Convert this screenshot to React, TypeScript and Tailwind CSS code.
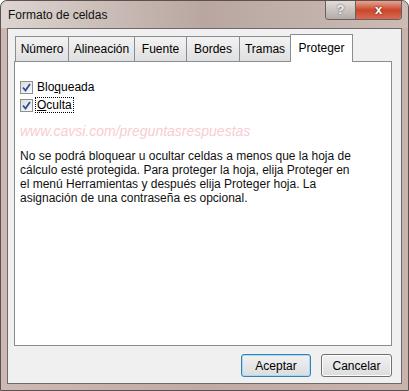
import React from "react";

const tabs = ["Número", "Alineación", "Fuente", "Bordes", "Tramas"];
const tabWidths = ["w-[54px]", "w-[67px]", "w-[53px]", "w-[54px]", "w-[52px]"];

function CheckBox({ label, focused }: { label: string; focused?: boolean }) {
  return (
    <label className="flex items-center h-[18px]">
      <span className="w-[13px] h-[13px] border border-[#8e8f8f] bg-gradient-to-br from-[#dcdcdc] to-[#fbfbfb] flex items-center justify-center">
        <svg width="9" height="9" viewBox="0 0 9 9">
          <path d="M1 4.5 L3.5 7.5 L8 1" fill="none" stroke="#2a4fa0" strokeWidth="1.8" />
        </svg>
      </span>
      <span
        className={
          "ml-[3px] px-[1px] leading-[14px] " +
          (focused ? "outline outline-1 outline-dotted outline-black" : "")
        }
      >
        {label === "Oculta" ? (
          <>
            <span className="underline">O</span>culta
          </>
        ) : (
          <>
            Blo<span className="underline">q</span>ueada
          </>
        )}
      </span>
    </label>
  );
}

export default function App() {
  return (
    <div
      className="w-[409px] h-[391px] flex flex-col rounded-t-[7px] border border-[#5c5050] bg-gradient-to-r from-[#cdb9b3] via-[#c2aaa4] to-[#c9b3ad] text-[12px] text-black"
      style={{ fontFamily: '"Liberation Sans", Arial, sans-serif' }}
    >
      {/* barra de título */}
      <div className="h-[27px] flex justify-between rounded-t-[7px] bg-gradient-to-r from-[#ddd5d1] via-[#b9a6a0] to-[#cbbcb6]">
        <span className="pl-[7px] pt-[5px] text-[12px] text-[#111]">Formato de celdas</span>
        <div className="flex mr-[6px] h-[19px] border border-t-0 border-[#6b5f5c] rounded-b-[4px] overflow-hidden">
          <div className="w-[30px] flex items-center justify-center bg-gradient-to-b from-[#e2dcdb] to-[#b3abaa] border-r border-[#6b5f5c] text-[13px] font-bold text-[#f4f4f4] [text-shadow:0_0_2px_#444]">
            ?
          </div>
          <div className="w-[45px] flex items-center justify-center bg-gradient-to-b from-[#e5a493] via-[#c9462a] to-[#d76a52] text-[13px] font-bold text-white [text-shadow:0_0_2px_#5a1a0a]">
            x
          </div>
        </div>
      </div>

      {/* área cliente */}
      <div className="mx-[6px] h-[356px] border border-[#6f6a69] bg-[#f0f0f0] flex flex-col">
        <div className="flex items-end pl-[7px] pt-[4px] h-[32px]">
          {tabs.map((t, i) => (
            <div
              key={t}
              className={
                tabWidths[i] +
                " h-[25px] -mr-[1px] border border-b-0 border-[#898c95] bg-gradient-to-b from-[#f2f2f2] to-[#e0e0e0] flex items-center justify-center text-[12px]"
              }
            >
              {t}
            </div>
          ))}
          <div className="w-[63px] h-[28px] -mb-[1px] border border-b-0 border-[#898c95] bg-white flex items-start justify-center pt-[4px] z-10 relative">
            Proteger
          </div>
        </div>

        <div className="ml-[6px] mr-[9px] h-[285px] border border-[#898c95] bg-white pl-[5px] pt-[16px]">
          <CheckBox label="Bloqueada" />
          <CheckBox label="Oculta" focused />
          <div className="mt-[9px] text-[14px] italic text-[#f8ccd2] leading-[16px]">
            www.cavsi.com/preguntasrespuestas
          </div>
          <p className="mt-[10px] leading-[14px] text-[12px] text-[#111]">
            No se podrá bloquear u ocultar celdas a menos que la hoja de
            <br />
            cálculo esté protegida. Para proteger la hoja, elija Proteger en
            <br />
            el menú Herramientas y después elija Proteger hoja. La
            <br />
            asignación de una contraseña es opcional.
          </p>
        </div>

        <div className="flex justify-end gap-[10px] mr-[9px] mt-[8px]">
          <button className="w-[70px] h-[23px] rounded-[3px] border border-[#3c7fb1] shadow-[inset_0_0_0_1px_#9fdcf7] bg-gradient-to-b from-[#f2f2f2] to-[#dcdcdc] text-[12px]">
            Aceptar
          </button>
          <button className="w-[71px] h-[23px] rounded-[3px] border border-[#707070] shadow-[inset_0_0_0_1px_#fcfcfc] bg-gradient-to-b from-[#f2f2f2] to-[#dcdcdc] text-[12px]">
            Cancelar
          </button>
        </div>
      </div>
    </div>
  );
}
